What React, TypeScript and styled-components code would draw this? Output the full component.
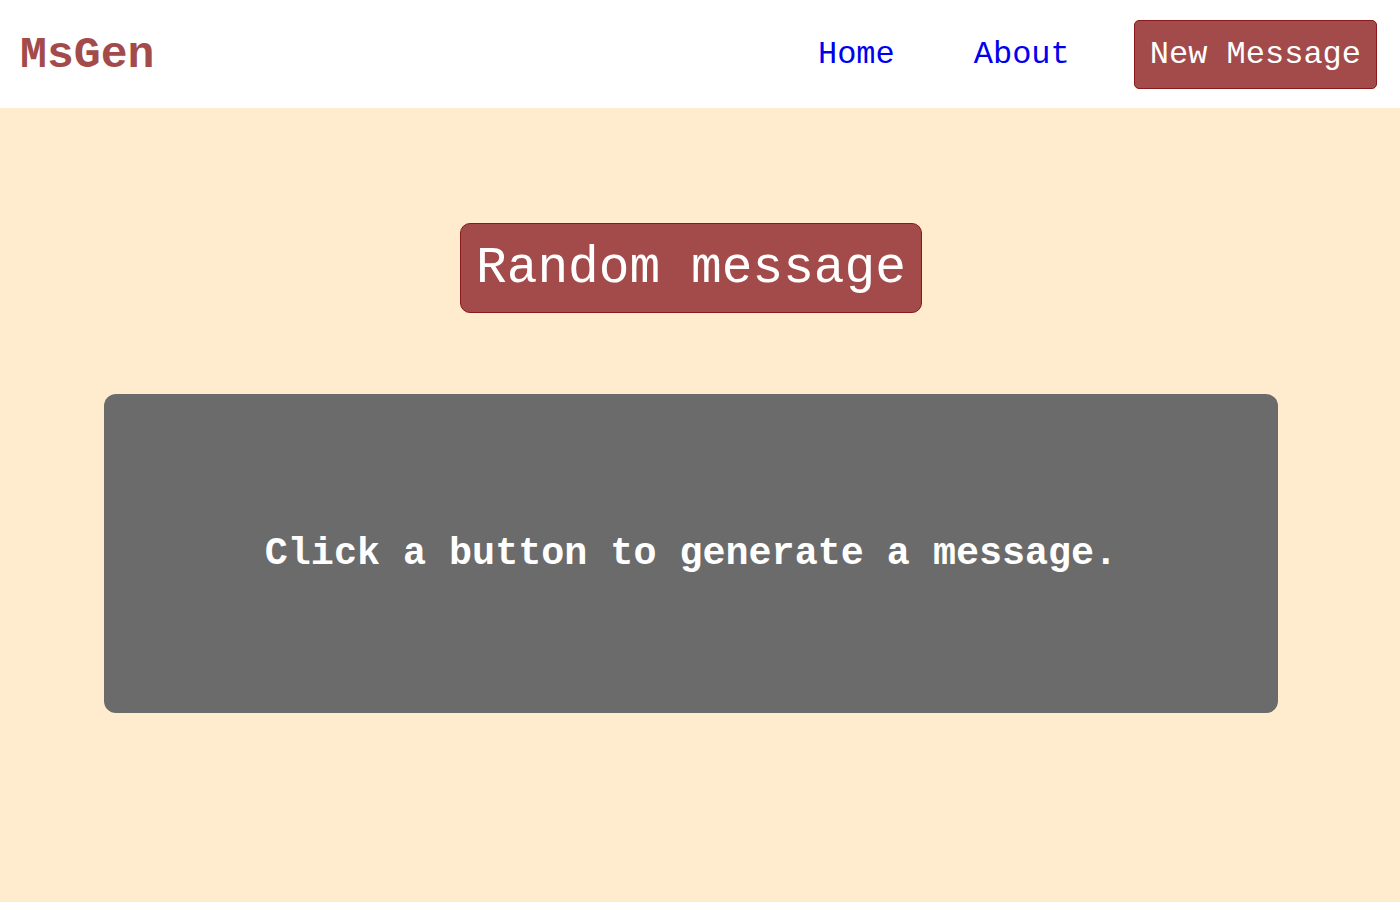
import React from "react";
import styled, { createGlobalStyle } from "styled-components";

const GlobalStyle = createGlobalStyle`
  html, body {
    margin: 0;
    padding: 0;
    background: #ffebcd;
    font-family: "Liberation Mono", "DejaVu Sans Mono", monospace;
  }
  * { box-sizing: border-box; }
`;

const Page = styled.div`
  min-height: 902px;
  background: #ffebcd;
`;

const Header = styled.header`
  height: 108px;
  background: #ffffff;
  display: flex;
  align-items: center;
  justify-content: space-between;
  padding: 0 23px 0 20px;
`;

const Logo = styled.div`
  font-size: 44.8px;
  font-weight: bold;
  color: #a34a4a;
  line-height: 1;
  padding-top: 2px;
`;

const Nav = styled.nav`
  display: flex;
  align-items: center;
`;

const NavLink = styled.a<{ $gap: number }>`
  font-size: 32px;
  color: #0000ee;
  text-decoration: none;
  margin-right: ${(p) => p.$gap}px;
`;

const Button = styled.button<{ $size: number; $radius: number }>`
  font-family: "Liberation Mono", "DejaVu Sans Mono", monospace;
  font-size: ${(p) => p.$size}px;
  color: #ffffff;
  background: #a34a4a;
  border: 1px solid #8b1a1a;
  border-radius: ${(p) => p.$radius}px;
  padding: 15px 15px;
  cursor: pointer;
  line-height: normal;
`;

const Main = styled.main`
  display: flex;
  flex-direction: column;
  align-items: center;
  padding: 115px 122px 0 104px;
`;

const Card = styled.section`
  margin-top: 81px;
  width: 100%;
  height: 319px;
  background: #6b6b6b;
  border-radius: 12px;
  display: flex;
  align-items: center;
  justify-content: center;
`;

const Placeholder = styled.p`
  margin: 0;
  color: #ffffff;
  font-weight: bold;
  font-size: 38.4px;
`;

export default function App() {
  return (
    <Page>
      <GlobalStyle />
      <Header>
        <Logo>MsGen</Logo>
        <Nav>
          <NavLink href="#" $gap={79}>Home</NavLink>
          <NavLink href="#" $gap={64}>About</NavLink>
          <Button $size={32} $radius={5}>New Message</Button>
        </Nav>
      </Header>
      <Main>
        <Button $size={51.2} $radius={10}>Random message</Button>
        <Card>
          <Placeholder>Click a button to generate a message.</Placeholder>
        </Card>
      </Main>
    </Page>
  );
}
